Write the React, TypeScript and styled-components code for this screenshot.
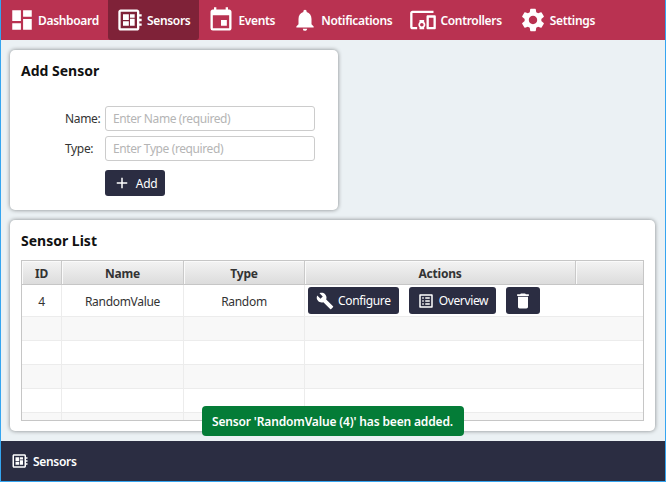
import React from "react";
import styled, { createGlobalStyle } from "styled-components";
import {
  MdAdd,
  MdBuild,
  MdDashboard,
  MdDelete,
  MdDeveloperBoard,
  MdDevicesOther,
  MdEvent,
  MdNotifications,
  MdOutlineListAlt,
  MdSettings,
} from "react-icons/md";

const GlobalStyle = createGlobalStyle`
  html, body {
    margin: 0;
    padding: 0;
    height: 100%;
    overflow: hidden;
  }
  * {
    box-sizing: border-box;
  }
  body {
    font-family: "Noto Sans", "Open Sans", Arial, sans-serif;
    font-size: 12px;
    color: #2b2d42;
  }
`;

const Shell = styled.div`
  position: relative;
  display: flex;
  flex-direction: column;
  width: 666px;
  height: 482px;
  border: solid #35a5f0;
  border-width: 0 1px 1px 1px;
  background: #ebf1f4;
`;

const NavBar = styled.nav`
  display: flex;
  flex: 0 0 40px;
  background: #b93251;
`;

const NavItem = styled.div<{ $active?: boolean; $iconSize: number }>`
  display: flex;
  align-items: center;
  gap: 3px;
  height: 40px;
  padding: 0 9px 0 8px;
  border-radius: 0 0 3px 3px;
  color: #fff;
  font-weight: 600;
  font-size: 12px;
  letter-spacing: -0.32px;
  background: ${(p) => (p.$active ? "#7f2238" : "transparent")};
  svg {
    font-size: ${(p) => p.$iconSize}px;
    flex: none;
  }
`;

const Content = styled.main`
  display: flex;
  flex: 1;
  flex-direction: column;
  gap: 10px;
  padding: 10px 10px 10px 9px;
  min-height: 0;
`;

const Card = styled.section<{ $width?: string; $height: string }>`
  width: ${(p) => p.$width || "100%"};
  height: ${(p) => p.$height};
  flex: none;
  padding: 10px 11px;
  border-radius: 5px;
  background: #fff;
  box-shadow: 0 0 4px rgba(0, 0, 0, 0.45);
`;

const Title = styled.h2`
  margin: 0;
  font-size: 14px;
  line-height: 22px;
  font-weight: 700;
  color: #111;
`;

const Form = styled.form`
  display: grid;
  grid-template-columns: 40px 210px;
  grid-auto-rows: 25px;
  row-gap: 5px;
  margin: 24px 0 0 44px;
`;

const Label = styled.label`
  align-self: center;
  font-size: 12px;
  letter-spacing: -0.35px;
  color: #333;
`;

const Input = styled.input`
  width: 210px;
  height: 25px;
  padding: 0 7px;
  border: 1px solid #ccc;
  border-radius: 3px;
  font: inherit;
  letter-spacing: -0.4px;
  outline: none;
  &::placeholder {
    color: #b5b5b5;
    opacity: 1;
  }
`;

const Button = styled.button`
  display: inline-flex;
  align-items: center;
  justify-content: center;
  gap: 4px;
  height: 27px;
  padding: 0 8px;
  border: none;
  border-radius: 3px;
  background: #2b2d42;
  color: #fff;
  font: inherit;
  letter-spacing: -0.35px;
  svg {
    font-size: 18px;
    flex: none;
  }
`;

const AddButton = styled(Button)`
  grid-column: 2;
  gap: 5px;
  width: 60px;
  height: 26px;
  margin-top: 4px;
`;

const TrashButton = styled(Button)`
  padding: 0 7px;
  svg {
    font-size: 20px;
  }
`;

const GridFrame = styled.div`
  height: 161px;
  margin-top: 8px;
  overflow: hidden;
  border: 1px solid #c6c6c6;
`;

const Table = styled.table`
  width: 100%;
  table-layout: fixed;
  border-collapse: separate;
  border-spacing: 0;
`;

const Th = styled.th<{ $width?: string }>`
  width: ${(p) => p.$width || "auto"};
  height: 24px;
  padding: 1px 0 0;
  border-right: 1px solid #c9c9c9;
  border-bottom: 1px solid #c6c6c6;
  box-shadow: inset 1px 1px 0 #fafafa;
  background: linear-gradient(#f3f3f3, #dcdcdc);
  font-size: 12px;
  font-weight: 700;
  color: #333;
  letter-spacing: -0.2px;
  &:last-child {
    border-right: none;
  }
`;

const Tr = styled.tr<{ $alt?: boolean; $tall?: boolean }>`
  height: ${(p) => (p.$tall ? "32px" : "24px")};
  background: ${(p) => (p.$alt ? "#f8f8f8" : "#fff")};
`;

const Td = styled.td`
  padding: 0;
  border-right: 1px solid #ececec;
  border-bottom: 1px solid #ececec;
  text-align: center;
  font-size: 12px;
  letter-spacing: -0.3px;
  color: #333;
`;

const TextCell = styled(Td)`
  padding-top: 2px;
`;

const ActionCell = styled(Td)`
  text-align: left;
  border-right: none;
`;

const Actions = styled.div`
  display: flex;
  gap: 10px;
  padding-left: 3px;
`;

const Footer = styled.footer`
  display: flex;
  flex: 0 0 40px;
  align-items: center;
  gap: 4px;
  padding-left: 10px;
  background: #2b2d42;
  color: #fff;
  font-weight: 600;
  letter-spacing: -0.32px;
  svg {
    font-size: 18px;
  }
`;

const Toast = styled.div`
  position: absolute;
  left: 201px;
  top: 406px;
  display: flex;
  align-items: center;
  justify-content: center;
  width: 262px;
  height: 30px;
  padding-right: 1px;
  border-radius: 4px;
  background: #047c37;
  color: #fff;
  font-weight: 600;
  letter-spacing: -0.15px;
`;

const navItems = [
  { label: "Dashboard", icon: <MdDashboard />, size: 26 },
  { label: "Sensors", icon: <MdDeveloperBoard />, size: 28, active: true },
  { label: "Events", icon: <MdEvent />, size: 28 },
  { label: "Notifications", icon: <MdNotifications />, size: 26 },
  { label: "Controllers", icon: <MdDevicesOther />, size: 28 },
  { label: "Settings", icon: <MdSettings />, size: 28 },
];

export default function App() {
  return (
    <Shell>
      <GlobalStyle />
      <NavBar>
        {navItems.map((item) => (
          <NavItem key={item.label} $active={item.active} $iconSize={item.size}>
            {item.icon}
            {item.label}
          </NavItem>
        ))}
      </NavBar>
      <Content>
        <Card $width="328px" $height="160px">
          <Title>Add Sensor</Title>
          <Form onSubmit={(e) => e.preventDefault()}>
            <Label>Name:</Label>
            <Input placeholder="Enter Name (required)" />
            <Label>Type:</Label>
            <Input placeholder="Enter Type (required)" />
            <AddButton>
              <MdAdd />
              Add
            </AddButton>
          </Form>
        </Card>
        <Card $height="211px">
          <Title>Sensor List</Title>
          <GridFrame>
            <Table>
              <thead>
                <tr>
                  <Th $width="40px">ID</Th>
                  <Th $width="122px">Name</Th>
                  <Th $width="121px">Type</Th>
                  <Th $width="271px">Actions</Th>
                  <Th />
                </tr>
              </thead>
              <tbody>
                <Tr $tall>
                  <TextCell>4</TextCell>
                  <TextCell>RandomValue</TextCell>
                  <TextCell>Random</TextCell>
                  <ActionCell colSpan={2}>
                    <Actions>
                      <Button>
                        <MdBuild />
                        Configure
                      </Button>
                      <Button>
                        <MdOutlineListAlt />
                        Overview
                      </Button>
                      <TrashButton>
                        <MdDelete />
                      </TrashButton>
                    </Actions>
                  </ActionCell>
                </Tr>
                {[true, false, true, false, true].map((alt, i) => (
                  <Tr key={i} $alt={alt}>
                    <Td />
                    <Td />
                    <Td />
                    <ActionCell colSpan={2} />
                  </Tr>
                ))}
              </tbody>
            </Table>
          </GridFrame>
        </Card>
      </Content>
      <Footer>
        <MdDeveloperBoard />
        Sensors
      </Footer>
      <Toast>Sensor 'RandomValue (4)' has been added.</Toast>
    </Shell>
  );
}
